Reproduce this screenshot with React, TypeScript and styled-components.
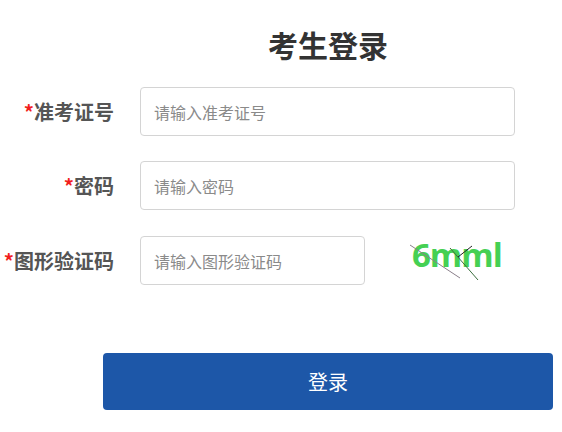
import styled, { createGlobalStyle } from 'styled-components';

const GlobalStyle = createGlobalStyle`
    html, body {
        margin: 0;
        padding: 0;
        background: #fff;
        font-family: "Microsoft YaHei", "Noto Sans CJK SC", sans-serif;
    }
`;

const fields = [
    { label: '准考证号', placeholder: '请输入准考证号', type: 'text' },
    { label: '密码', placeholder: '请输入密码', type: 'password' },
];

const App = () => {
    return (
        <>
            <GlobalStyle />
            <StyledLogin>
                <Title>考生登录</Title>
                <Form>
                    {fields.map((field) => (
                        <Row key={field.label}>
                            <Label>
                                <Star>*</Star>
                                {field.label}
                            </Label>
                            <Input type={field.type} placeholder={field.placeholder} />
                        </Row>
                    ))}
                    <Row $offset={1}>
                        <Label>
                            <Star>*</Star>图形验证码
                        </Label>
                        <Input type="text" placeholder="请输入图形验证码" $short />
                        <Captcha>
                            <CaptchaText>6mml</CaptchaText>
                            <CaptchaNoise viewBox="0 0 96 44">
                                <line x1="2" y1="9" x2="52" y2="42" stroke="#8a7f8a" strokeWidth="1" />
                                <line x1="42" y1="12" x2="70" y2="44" stroke="#3b6e3e" strokeWidth="1" />
                                <line x1="50" y1="21" x2="64" y2="10" stroke="#222" strokeWidth="1" />
                            </CaptchaNoise>
                        </Captcha>
                    </Row>
                </Form>
                <SubmitButton type="button">登录</SubmitButton>
            </StyledLogin>
        </>
    );
};

const StyledLogin = styled.div`
    width: 562px;
    height: 432px;
    box-sizing: border-box;
    padding-top: 22px;
    display: flex;
    flex-direction: column;
`;

const Title = styled.h1`
    margin: 0 0 21px 0;
    padding-left: 94px;
    text-align: center;
    font-size: 30px;
    line-height: 44px;
    font-weight: 700;
    color: #333;
`;

const Form = styled.div`
    display: flex;
    flex-direction: column;
    gap: 25px;
`;

const Row = styled.div<{ $offset?: number }>`
    display: flex;
    align-items: center;
    gap: 26px;
    margin-top: ${({ $offset }) => $offset ?? 0}px;
`;

const Label = styled.label`
    width: 114px;
    flex-shrink: 0;
    text-align: right;
    font-size: 20px;
    font-weight: 700;
    color: #555;
    white-space: nowrap;
`;

const Star = styled.span`
    color: #f21d1d;
`;

const Input = styled.input<{ $short?: boolean }>`
    width: ${({ $short }) => ($short ? '225px' : '375px')};
    height: 49px;
    box-sizing: border-box;
    padding: 0 13px;
    border: 1px solid #d4d4d4;
    border-radius: 4px;
    font-family: inherit;
    font-size: 16px;
    color: #333;
    &::placeholder {
        color: #8a8a8a;
    }
    &:focus {
        outline: none;
    }
`;

const Captcha = styled.div`
    position: relative;
    margin-left: 17px;
    width: 96px;
    height: 44px;
    align-self: flex-start;
    display: flex;
    align-items: flex-start;
`;

const CaptchaText = styled.span`
    font-family: "Open Sans", "DejaVu Sans", sans-serif;
    font-size: 33px;
    line-height: 1;
    font-weight: 700;
    color: #45d053;
    letter-spacing: -1px;
    padding: 2px 0 0 4px;
`;

const CaptchaNoise = styled.svg`
    position: absolute;
    inset: 0;
    width: 100%;
    height: 100%;
`;

const SubmitButton = styled.button`
    margin: 68px 0 0 103px;
    width: 450px;
    height: 57px;
    border: none;
    border-radius: 4px;
    background: #1d57a8;
    color: #fff;
    font-family: inherit;
    font-size: 20px;
    cursor: pointer;
`;

export default App;
